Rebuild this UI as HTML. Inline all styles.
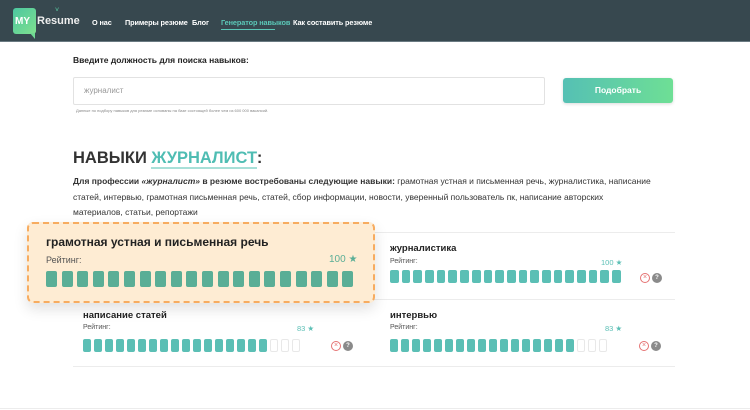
<!DOCTYPE html>
<html><head><meta charset="utf-8"><style>
*{margin:0;padding:0;box-sizing:border-box}
body{width:750px;height:410px;overflow:hidden;background:#fff;font-family:"Liberation Sans",sans-serif;color:#222;position:relative}
.a{position:absolute;white-space:nowrap}
.hdr{position:absolute;left:0;top:0;width:750px;height:42px;background:#37484f;border-bottom:1px solid #6a7a82}
.nav{font-size:7.3px;font-weight:bold;color:#fff;top:18px;letter-spacing:-0.1px}
.bars{position:absolute;display:flex}
.bars i{display:block;border-radius:2px;background:#5bbfb5}
.bars i.e{background:#fff;border:1px solid #e8e8e8}
.ic{position:absolute;width:10px;height:10px;border-radius:50%}
.x{border:1px solid #e57373;color:#e57373;font-size:7px;line-height:8px;text-align:center}
.q{background:#8a8a8a;color:#fff;font-size:6px;line-height:10px;text-align:center;font-weight:bold}
.t{font-size:9.5px;font-weight:bold;color:#222}
.r{font-size:7px;color:#555}
.s{font-size:7.5px;color:#5bbfb5}
.ln{position:absolute;height:1px;background:#ececec}
</style></head><body>
<div class="hdr"></div>
<div class="a" style="left:13px;top:8px;width:23px;height:26px;border-radius:3px;background:linear-gradient(135deg,#4cc7a0,#7fe08f)"></div>
<div class="a" style="left:30px;top:33px;width:0;height:0;border-left:5px solid transparent;border-top:6px solid #6fd993"></div>
<div class="a" style="left:15px;top:16px;font-size:10px;font-weight:bold;color:#fff">MY</div>
<div class="a" style="left:37px;top:15px;font-size:11px;font-weight:bold;color:#eee">Resume</div>
<div class="a" style="left:55px;top:7px;font-size:7px;color:#5bd0a6">˅</div>
<div class="a nav" style="left:92px">О нас</div>
<div class="a nav" style="left:125px">Примеры резюме</div>
<div class="a nav" style="left:192px">Блог</div>
<div class="a nav" style="left:221px;color:#5bc7b7">Генератор навыков</div>
<div class="a" style="left:221px;top:29px;width:54px;height:1px;background:#5bc7b7"></div>
<div class="a nav" style="left:293px">Как составить резюме</div>

<div class="a" style="left:73px;top:55px;font-size:8.5px;font-weight:bold">Введите должность для поиска навыков:</div>
<div class="a" style="left:73px;top:77px;width:472px;height:28px;border:1px solid #e2e2e2;border-radius:2px"></div>
<div class="a" style="left:84px;top:86px;font-size:8px;color:#999">журналист</div>
<div class="a" style="left:563px;top:78px;width:110px;height:25px;border-radius:3px;background:linear-gradient(90deg,#55c0b4,#6edf95);box-shadow:0 1px 3px rgba(0,0,0,.15)"></div>
<div class="a" style="left:563px;top:85px;width:110px;text-align:center;font-size:8.5px;font-weight:bold;color:#fff">Подобрать</div>
<div class="a" style="left:76px;top:108px;font-size:4px;color:#888">Данные по подбору навыков для резюме основаны на базе состоящей более чем из 600 000 вакансий.</div>

<div class="a" style="left:73px;top:149px;font-size:16.5px;font-weight:bold;color:#333">НАВЫКИ <span style="color:#4fbdb3;border-bottom:2px solid #a8e0d8">ЖУРНАЛИСТ</span>:</div>
<div class="a" style="left:73px;top:174px;width:580px;white-space:normal;font-size:8.5px;line-height:15.5px;color:#333"><b>Для профессии <i>«журналист»</i> в резюме востребованы следующие навыки:</b> грамотная устная и письменная речь, журналистика, написание статей, интервью, грамотная письменная речь, статей, сбор информации, новости, уверенный пользователь пк, написание авторских материалов, статьи, репортажи</div>

<div class="ln" style="left:73px;top:232px;width:602px"></div>
<div class="ln" style="left:73px;top:299px;width:602px"></div>
<div class="ln" style="left:73px;top:366px;width:602px"></div>
<div class="ln" style="left:0;top:408px;width:750px"></div>

<div class="a t" style="left:390px;top:243px">журналистика</div>
<div class="a r" style="left:390px;top:258px">Рейтинг:</div>
<div class="a s" style="left:601px;top:258px">100 ★</div>
<div class="bars" style="left:390px;top:270px;gap:3px"><i style="width:8.7px;height:13px"></i><i style="width:8.7px;height:13px"></i><i style="width:8.7px;height:13px"></i><i style="width:8.7px;height:13px"></i><i style="width:8.7px;height:13px"></i><i style="width:8.7px;height:13px"></i><i style="width:8.7px;height:13px"></i><i style="width:8.7px;height:13px"></i><i style="width:8.7px;height:13px"></i><i style="width:8.7px;height:13px"></i><i style="width:8.7px;height:13px"></i><i style="width:8.7px;height:13px"></i><i style="width:8.7px;height:13px"></i><i style="width:8.7px;height:13px"></i><i style="width:8.7px;height:13px"></i><i style="width:8.7px;height:13px"></i><i style="width:8.7px;height:13px"></i><i style="width:8.7px;height:13px"></i><i style="width:8.7px;height:13px"></i><i style="width:8.7px;height:13px"></i></div>
<div class="ic x" style="left:640px;top:273px">×</div>
<div class="ic q" style="left:652px;top:273px">?</div>

<div class="a t" style="left:83px;top:310px">написание статей</div>
<div class="a r" style="left:83px;top:324px">Рейтинг:</div>
<div class="a s" style="left:297px;top:324px">83 ★</div>
<div class="bars" style="left:83px;top:339px;gap:3px"><i style="width:8px;height:13px"></i><i style="width:8px;height:13px"></i><i style="width:8px;height:13px"></i><i style="width:8px;height:13px"></i><i style="width:8px;height:13px"></i><i style="width:8px;height:13px"></i><i style="width:8px;height:13px"></i><i style="width:8px;height:13px"></i><i style="width:8px;height:13px"></i><i style="width:8px;height:13px"></i><i style="width:8px;height:13px"></i><i style="width:8px;height:13px"></i><i style="width:8px;height:13px"></i><i style="width:8px;height:13px"></i><i style="width:8px;height:13px"></i><i style="width:8px;height:13px"></i><i style="width:8px;height:13px"></i><i class="e" style="width:8px;height:13px"></i><i class="e" style="width:8px;height:13px"></i><i class="e" style="width:8px;height:13px"></i></div>
<div class="ic x" style="left:331px;top:341px">×</div>
<div class="ic q" style="left:343px;top:341px">?</div>

<div class="a t" style="left:390px;top:310px">интервью</div>
<div class="a r" style="left:390px;top:324px">Рейтинг:</div>
<div class="a s" style="left:605px;top:324px">83 ★</div>
<div class="bars" style="left:390px;top:339px;gap:3px"><i style="width:8px;height:13px"></i><i style="width:8px;height:13px"></i><i style="width:8px;height:13px"></i><i style="width:8px;height:13px"></i><i style="width:8px;height:13px"></i><i style="width:8px;height:13px"></i><i style="width:8px;height:13px"></i><i style="width:8px;height:13px"></i><i style="width:8px;height:13px"></i><i style="width:8px;height:13px"></i><i style="width:8px;height:13px"></i><i style="width:8px;height:13px"></i><i style="width:8px;height:13px"></i><i style="width:8px;height:13px"></i><i style="width:8px;height:13px"></i><i style="width:8px;height:13px"></i><i style="width:8px;height:13px"></i><i class="e" style="width:8px;height:13px"></i><i class="e" style="width:8px;height:13px"></i><i class="e" style="width:8px;height:13px"></i></div>
<div class="ic x" style="left:639px;top:341px">×</div>
<div class="ic q" style="left:651px;top:341px">?</div>

<div class="a" style="left:27px;top:222px;width:348px;height:81px;background:#feecd3;border:2px dashed #f7ac60;border-radius:6px;box-shadow:0 6px 14px rgba(0,0,0,.12)"></div>
<div class="a" style="left:46px;top:235px;font-size:12px;font-weight:bold;color:#222">грамотная устная и письменная речь</div>
<div class="a" style="left:46px;top:255px;font-size:9px;color:#555">Рейтинг:</div>
<div class="a" style="left:329px;top:254px;font-size:10px;color:#5aae96">100 ★</div>
<div class="bars" style="left:46px;top:271px;gap:4.6px"><i style="width:11px;height:16px;background:#5aae96"></i><i style="width:11px;height:16px;background:#5aae96"></i><i style="width:11px;height:16px;background:#5aae96"></i><i style="width:11px;height:16px;background:#5aae96"></i><i style="width:11px;height:16px;background:#5aae96"></i><i style="width:11px;height:16px;background:#5aae96"></i><i style="width:11px;height:16px;background:#5aae96"></i><i style="width:11px;height:16px;background:#5aae96"></i><i style="width:11px;height:16px;background:#5aae96"></i><i style="width:11px;height:16px;background:#5aae96"></i><i style="width:11px;height:16px;background:#5aae96"></i><i style="width:11px;height:16px;background:#5aae96"></i><i style="width:11px;height:16px;background:#5aae96"></i><i style="width:11px;height:16px;background:#5aae96"></i><i style="width:11px;height:16px;background:#5aae96"></i><i style="width:11px;height:16px;background:#5aae96"></i><i style="width:11px;height:16px;background:#5aae96"></i><i style="width:11px;height:16px;background:#5aae96"></i><i style="width:11px;height:16px;background:#5aae96"></i><i style="width:11px;height:16px;background:#5aae96"></i></div>
</body></html>
